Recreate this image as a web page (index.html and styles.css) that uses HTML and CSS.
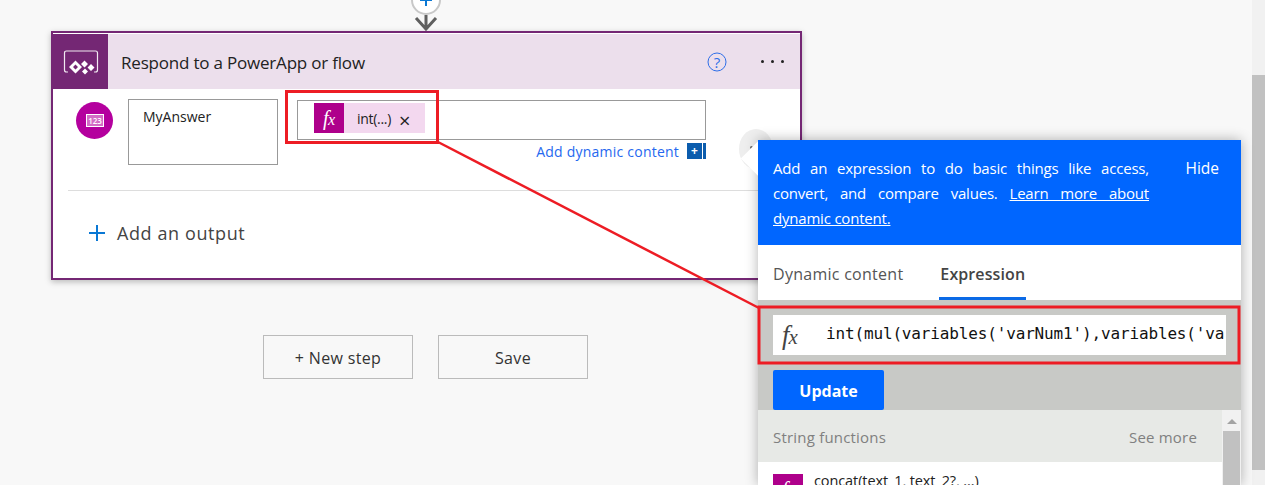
FILE: index.html
```html
<!DOCTYPE html>
<html lang="en">
<head>
<meta charset="utf-8">
<title>Respond to a PowerApp or flow</title>
<link rel="stylesheet" href="styles.css">
</head>
<body>
<div class="page">
  <main class="canvas">
    <div class="connector">
      <svg width="34" height="31" viewBox="0 0 34 31">
        <circle cx="17" cy="0" r="14" fill="#fff" stroke="#c8c8c8" stroke-width="2"/>
        <path d="M17 -6V6M11 0H23" stroke="#0a78d4" stroke-width="2" fill="none"/>
        <path d="M17 15V29M7 18L17 29L27 18" stroke="#5f5f5f" stroke-width="3" fill="none"/>
      </svg>
    </div>
    <section class="card">
      <header class="card-head">
        <div class="app-icon">
          <svg width="36" height="28" viewBox="0 0 36 28">
            <path d="M1.500 22V5Q1.500 3 3.500 3H32.500Q34.500 3 34.500 5V22Q34.500 24 32.500 24H31M1.500 22Q1.500 24 3.500 24H5" fill="none" stroke="#fff" stroke-width="1.200" opacity=".9"/>
            <path d="M12.500 12.500L19 19L12.500 25.500L6 19ZM12.500 16.500L10 19L12.500 21.500L15 19Z" fill="#fff" fill-rule="evenodd"/>
            <path d="M21.500 12.500L25 16L21.500 19.500L18 16ZM28 16L31.500 19.500L28 23L24.500 19.500ZM22 20.500L25 23.500L22 26.500L19 23.500Z" fill="#fff"/>
          </svg>
        </div>
        <h1 class="card-title">Respond to a PowerApp or flow</h1>
        <svg class="help" width="20" height="22" viewBox="0 0 20 22">
          <circle cx="10" cy="11" r="9" fill="none" stroke="#2f6fe8" stroke-width="1"/>
          <text x="10" y="16.500" text-anchor="middle" class="help-mark">?</text>
        </svg>
        <div class="dots"><i></i><i></i><i></i></div>
      </header>
      <div class="output-row">
        <div class="num-badge">
          <svg width="18" height="13" viewBox="0 0 18 13">
            <rect x=".5" y=".5" width="17" height="12" fill="#d36cc6" stroke="#fff"/>
            <text x="9" y="9.500" text-anchor="middle" class="num-text">123</text>
          </svg>
        </div>
        <div class="name-box">MyAnswer</div>
        <div class="value-col">
          <div class="value-box">
            <span class="token">
              <span class="token-fx fx"><span class="fx-f">f</span><span class="fx-x">x</span></span>
              <span class="token-label">int(...)</span>
              <span class="token-x">×</span>
            </span>
          </div>
          <div class="dyn-link">Add dynamic content <span class="dyn-plus">+</span><span class="dyn-bar"></span></div>
        </div>
      </div>
      <div class="add-row">
        <svg width="16" height="16" viewBox="0 0 16 16"><path d="M8 0V16M0 8H16" stroke="#0a78d4" stroke-width="2"/></svg>
        <span>Add an output</span>
      </div>
    </section>
    <div class="actions">
      <button class="btn">+ New step</button>
      <button class="btn">Save</button>
    </div>
  </main>
  <div class="scrollbar"><div class="scroll-thumb"></div></div>
</div>

<div class="peek"><i></i></div>
<aside class="panel">
  <div class="panel-notch"></div>
  <div class="panel-info">
    <p>Add an expression to do basic things like access, convert, and compare values. <a href="#">Learn more about dynamic content.</a></p>
    <span class="hide">Hide</span>
  </div>
  <nav class="tabs">
    <span class="tab">Dynamic content</span>
    <span class="tab tab-on">Expression</span>
  </nav>
  <div class="editor">
    <div class="expr">
      <span class="expr-fx fx"><span class="fx-f">f</span><span class="fx-x">x</span></span>
      <span class="expr-code">int(mul(variables('varNum1'),variables('varNum2')))</span>
    </div>
    <button class="update">Update</button>
  </div>
  <div class="fn-list">
    <div class="fn-main">
      <div class="fn-head"><span>String functions</span><span>See more</span></div>
      <div class="fn-item"><span class="fn-icon fx"><span class="fx-f">f</span><span class="fx-x">x</span></span><span class="fn-name">concat(text_1, text_2?, ...)</span></div>
    </div>
    <div class="fn-scroll">
      <span class="fn-arrow"></span>
      <div class="fn-thumb"></div>
    </div>
  </div>
</aside>

<svg class="marks" width="1265" height="485" viewBox="0 0 1265 485">
  <rect x="286.500" y="91.500" width="151" height="51" fill="none" stroke="#ed1c24" stroke-width="3"/>
  <rect x="759" y="307" width="480" height="56" fill="none" stroke="#ed1c24" stroke-width="3"/>
  <path d="M438 142L759 308" stroke="#ed1c24" stroke-width="2.500" fill="none"/>
</svg>
</body>
</html>
```
FILE: styles.css
```css
* { box-sizing: border-box; }
html, body { margin: 0; height: 485px; overflow: hidden; }
body {
  background: #f8f8f8;
  font-family: "Open Sans", "Noto Sans", "Liberation Sans", sans-serif;
  color: #333;
  position: relative;
}
.page { display: flex; height: 485px; }
.canvas { flex: 1; padding-left: 51px; }
.scrollbar { width: 13px; background: #f1f1f1; padding-top: 75px; height: 485px; }
.scroll-thumb { height: 395px; background: #c1c1c1; }
.connector { width: 750px; height: 31px; display: flex; justify-content: center; }
.card {
  width: 751px; height: 249px;
  border: 2px solid #742774;
  background: #fff;
  box-shadow: 0 2px 6px rgba(0,0,0,.25);
}
.card-head {
  display: flex; align-items: center;
  height: 55px; margin-top: 1px;
  background: #ecdfec;
}
.app-icon {
  width: 55px; height: 55px; background: #742774;
  display: flex; align-items: center; justify-content: center;
}
.card-title { flex: 1; margin: 1px 0 0 13px; font-size: 17px; font-weight: 400; color: #222; letter-spacing: -.2px; }
.help { margin-right: 34px; }
.help-mark { font: 15px "Open Sans", sans-serif; fill: #2f6fe8; }
.dots { display: flex; gap: 7px; margin-right: 16px; }
.dots i { width: 3px; height: 3px; border-radius: 50%; background: #222; }
.output-row { display: flex; align-items: flex-start; padding: 10px 0 0 23px; height: 101px; }
.num-badge {
  width: 37px; height: 37px; margin-top: 3px; border-radius: 50%; background: #b4009e;
  display: flex; align-items: center; justify-content: center;
}
.num-text { font: 600 8px "Open Sans", sans-serif; fill: #fff; }
.name-box {
  width: 150px; height: 66px; margin-left: 15px;
  border: 1px solid #999; padding: 7px 14px;
  font-size: 14px; color: #222; letter-spacing: 0;
}
.value-col { margin-left: 19px; width: 409px; }
.value-box { height: 40px; border: 1px solid #999; padding: 2px 16px 0; margin-top: 1px; }
.token { display: inline-flex; align-items: center; height: 30px; background: #f3d8ef; width: 111px; }
.fx { font-family: "Liberation Serif", serif; font-style: italic; display: flex; align-items: center; justify-content: center; }
.fx-f { font-size: 1.2em; }
.fx-x { font-size: .95em; margin-left: -.04em; padding-top: .25em; }
.token-fx {
  width: 30px; height: 30px; background: #ae008b; color: #fff;
  font-size: 17px; flex: none;
}
.token-label { margin-left: 13px; font-size: 14px; color: #222; letter-spacing: -.3px; }
.token-x { margin-left: 8px; font-size: 20px; font-weight: 400; line-height: 1; color: #222; padding-top: 5px; }
.dyn-link {
  display: flex; justify-content: flex-end; align-items: center;
  height: 18px; margin-top: 2px; font-size: 14px; color: #2568ef; letter-spacing: .22px;
}
.dyn-plus {
  width: 15px; height: 16px; margin-left: 8px; background: #0b5cad; color: #fff;
  font-size: 12px; font-weight: 700; line-height: 16px; text-align: center;
}
.dyn-bar { width: 3px; height: 16px; margin-left: 1px; background: #0b5cad; }
.add-row {
  margin: 0 0 0 15px; height: 84px; border-top: 1px solid #ddd;
  display: flex; align-items: center; gap: 12px; padding-left: 21px;
  font-size: 18px; color: #444; letter-spacing: .6px;
}
.actions { display: flex; gap: 25px; margin: 55px 0 0 212px; }
.btn {
  width: 150px; height: 44px; background: #f8f8f8; border: 1px solid #bbb;
  font: 16px "Open Sans", sans-serif; color: #333; letter-spacing: .35px; padding-top: 2px;
}
.peek {
  position: absolute; left: 739px; top: 129px;
  width: 34px; height: 40px; border-radius: 50%; background: #eeeeee;
}
.peek i { position: absolute; left: 11px; top: 17px; width: 3px; height: 3px; border-radius: 50%; background: #666; }
.panel {
  position: absolute; left: 758px; top: 140px; width: 483px; height: 345px;
  background: #fff; box-shadow: 0 0 12px rgba(0,0,0,.3);
}
.panel-notch {
  position: absolute; left: -12px; top: 6px; width: 25px; height: 25px;
  background: #fff; transform: rotate(45deg);
}
.panel-info {
  position: relative; height: 105px; background: #0066ff; color: #fff;
  display: flex; padding: 16px 22px 0 15px; font-size: 15px; line-height: 25px;
}
.panel-info p { margin: 0; width: 376px; text-align: justify; letter-spacing: -.2px; }
.panel-info a { color: #fff; }
.hide { margin-left: auto; font-size: 15.500px; }
.tabs { height: 55px; display: flex; gap: 36px; padding: 0 15px; font-size: 16px; color: #555; }
.tab { height: 55px; padding-top: 18px; letter-spacing: .27px; }
.tab-on {
  font-weight: 600; color: #444; border-bottom: 3px solid #0b6ae6;
  padding-left: 1px; padding-right: 1px; letter-spacing: .1px;
}
.editor { height: 110px; background: #c8c9c6; padding: 15px 15px 0; }
.expr {
  height: 40px; background: #fff; display: flex; align-items: center; overflow: hidden; padding-left: 9px;
}
.expr-fx { width: 44px; font-size: 22px; color: #444; flex: none; font-weight: 400; justify-content: flex-start; }
.expr-code { font: 16px "DejaVu Sans Mono", "Liberation Mono", monospace; color: #111; white-space: nowrap; letter-spacing: -.15px; padding-bottom: 4px; }
.update {
  display: block; width: 111px; height: 40px; margin-top: 15px;
  border: 0; border-radius: 2px; background: #0066ff; color: #fff;
  font: 700 16px "Open Sans", sans-serif; padding-top: 2px;
}
.fn-list { display: flex; height: 75px; }
.fn-main { width: 464px; }
.fn-head {
  height: 52px; background: #e7e9e6; display: flex; justify-content: space-between; align-items: center;
  padding: 2px 25px 0 15px; font-size: 15px; color: #808080; letter-spacing: .2px;
}
.fn-item { display: flex; gap: 11px; padding: 12px 15px 0; overflow: hidden; }
.fn-icon {
  width: 30px; height: 30px; background: #ae008b; color: #fff;
  font-size: 17px; flex: none;
}
.fn-name { font-size: 14.500px; line-height: 13px; color: #222; letter-spacing: -.1px; }
.fn-scroll { width: 19px; background: #f1f1f1; padding-top: 21px; position: relative; }
.fn-arrow {
  position: absolute; left: 5px; top: 9px; width: 0; height: 0;
  border: 5px solid transparent; border-top: 0; border-bottom: 5px solid #a3a3a3;
}
.fn-thumb { height: 60px; width: 17px; margin-left: 1px; background: #c1c1c1; }
.marks { position: absolute; left: 0; top: 0; pointer-events: none; }
```
